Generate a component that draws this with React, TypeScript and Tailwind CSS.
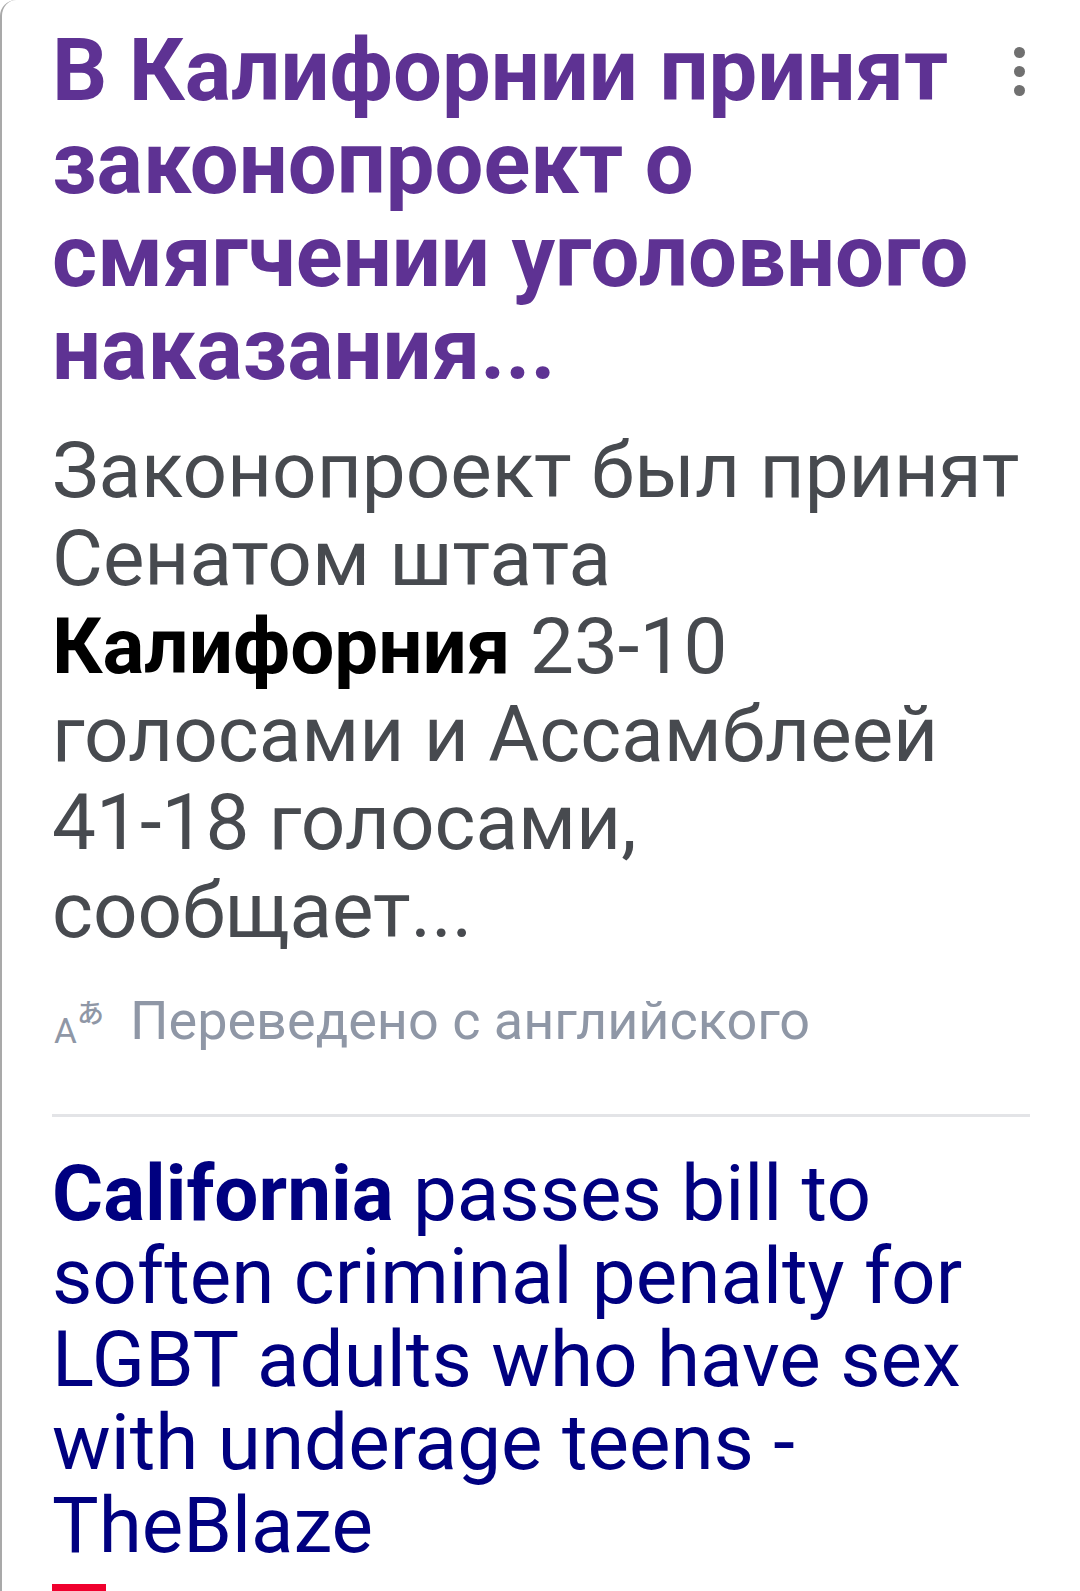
import { Fragment } from 'react';

const titleLines = ['В Калифорнии принят', 'законопроект о', 'смягчении уголовного', 'наказания...'];
const enLines = ['passes bill to', 'soften criminal penalty for', 'LGBT adults who have sex', 'with underage teens -', 'TheBlaze'];

function TranslateIcon() {
  return (
    <div className="relative w-[52px] h-[52px] shrink-0 text-[#8f97a6]">
      <span className="absolute left-[2px] top-[19px] text-[35px] leading-[35px]">A</span>
      <span className="absolute left-[25px] top-[2px] text-[27px] leading-[30px] font-medium font-['Noto_Sans_CJK_JP',sans-serif]">あ</span>
    </div>
  );
}

export default function App() {
  return (
    <div className="w-[1080px] h-[1591px] overflow-hidden bg-white border-l-2 border-[#a9a9a9] rounded-tl-[16px] rounded-tr-[16px] font-['Roboto',sans-serif]">
      <div className="pl-[50px] pr-[50px] pt-[24px]">
        <div className="relative">
          <h1 className="text-[86.7px] leading-[93px] font-bold text-[#5e3293]">
            {titleLines.map((line) => (
              <Fragment key={line}>{line}<br /></Fragment>
            ))}
          </h1>
          <div className="absolute right-[5px] top-[23px] flex flex-col gap-[8px]">
            <span className="w-[11px] h-[11px] rounded-full bg-[#707070]" />
            <span className="w-[11px] h-[11px] rounded-full bg-[#707070]" />
            <span className="w-[11px] h-[11px] rounded-full bg-[#707070]" />
          </div>
        </div>
        <p className="mt-[30px] text-[78.2px] leading-[88px] text-[#474a4f]">
          Законопроект был принят<br />
          Сенатом штата<br />
          <b className="font-bold text-black">Калифорния</b> 23-10<br />
          голосами и Ассамблеей<br />
          41-18 голосами,<br />
          сообщает...
        </p>
        <div className="mt-[39px] flex items-center gap-[26px] h-[56px]">
          <TranslateIcon />
          <span className="text-[54px] leading-[56px] text-[#8f97a6]">Переведено с английского</span>
        </div>
        <div className="mt-[65px] h-[3px] bg-[#e3e4e7]" />
        <p className="mt-[35px] text-[78.2px] leading-[83px] text-[#000080]">
          <b className="font-bold">California</b> {enLines[0]}<br />
          {enLines.slice(1).map((line) => (
            <Fragment key={line}>{line}<br /></Fragment>
          ))}
        </p>
        <div className="mt-[17px] w-[54px] h-[20px] bg-[#f0002d]" />
      </div>
    </div>
  );
}
